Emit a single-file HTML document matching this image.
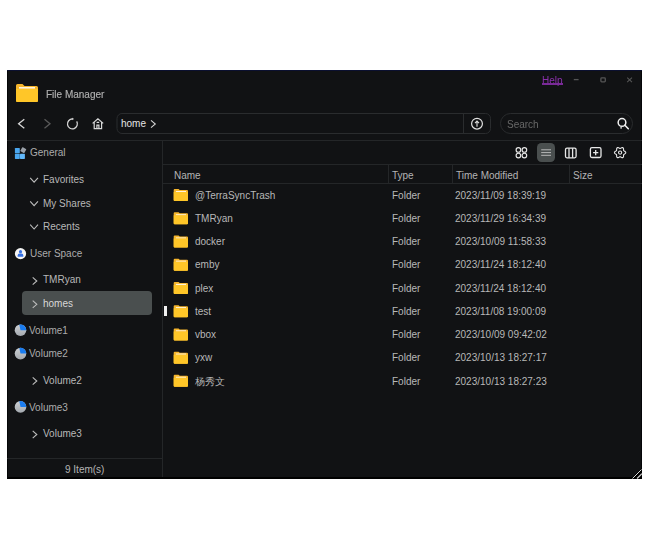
<!DOCTYPE html>
<html><head><meta charset="utf-8">
<style>
*{margin:0;padding:0;box-sizing:border-box}
html,body{width:648px;height:550px;background:#fff;overflow:hidden}
body{position:relative;font-family:"Liberation Sans",sans-serif;font-size:10px}
.t{position:absolute;white-space:pre;line-height:12px;color:#b8b8b8}
.r{position:absolute}
#ic{position:absolute;left:0;top:0}
</style></head><body>
<div class="r" style="left:7px;top:70px;width:635px;height:409px;background:#111214;"></div>
<div class="r" style="left:7px;top:70px;width:635px;height:1px;background:#0b1030;"></div>
<div class="r" style="left:7px;top:477px;width:635px;height:2px;background:#000;"></div>
<div class="r" style="left:7px;top:71px;width:1px;height:407px;background:#050608;"></div>
<div class="r" style="left:641px;top:71px;width:1px;height:407px;background:#050608;"></div>
<div class="t" style="left:46px;top:89px;color:#b0b0b0;will-change:transform;-webkit-text-stroke:0.15px #b0b0b0">File Manager</div>
<div class="t" style="left:542px;top:74.6px;color:#8a30ac;will-change:transform">Help</div>
<div class="r" style="left:542px;top:83.4px;width:21px;height:1.4px;background:#7a2a98;"></div>
<div class="t" style="left:121px;top:118px;color:#e4e4e4;">home</div>
<div class="t" style="left:507px;top:119px;color:#686868;">Search</div>
<div class="r" style="left:7px;top:140px;width:635px;height:1px;background:#242628;"></div>
<div class="r" style="left:162px;top:141px;width:1px;height:336px;background:#242628;"></div>
<div class="r" style="left:7px;top:458px;width:155px;height:1px;background:#242628;"></div>
<div class="t" style="left:65px;top:464px;color:#b4b4b4;">9 Item(s)</div>
<div class="t" style="left:30px;top:147px;color:#acacac;">General</div>
<div class="t" style="left:43px;top:174px;">Favorites</div>
<div class="t" style="left:43px;top:198px;">My Shares</div>
<div class="t" style="left:43px;top:221px;">Recents</div>
<div class="t" style="left:30px;top:248px;color:#acacac;">User Space</div>
<div class="t" style="left:43px;top:274px;">TMRyan</div>
<div class="r" style="left:22px;top:291px;width:130px;height:24px;background:#4a4f4f;border-radius:4px"></div>
<div class="t" style="left:43px;top:298px;color:#d8d8d8;">homes</div>
<div class="t" style="left:29px;top:325px;color:#acacac;">Volume1</div>
<div class="t" style="left:29px;top:348px;color:#acacac;">Volume2</div>
<div class="t" style="left:43px;top:375px;">Volume2</div>
<div class="t" style="left:29px;top:402px;color:#acacac;">Volume3</div>
<div class="t" style="left:43px;top:428px;">Volume3</div>
<div class="r" style="left:164px;top:306px;width:3px;height:10px;background:#f0f0f0;"></div>
<div class="r" style="left:536.8px;top:143.4px;width:18.5px;height:18.3px;background:#4a4f4f;border-radius:4.5px"></div>
<div class="r" style="left:163px;top:164px;width:479px;height:1px;background:#242628;"></div>
<div class="r" style="left:163px;top:183px;width:479px;height:1px;background:#242628;"></div>
<div class="r" style="left:388px;top:165px;width:1px;height:18px;background:#242628;"></div>
<div class="r" style="left:452px;top:165px;width:1px;height:18px;background:#242628;"></div>
<div class="r" style="left:569px;top:165px;width:1px;height:18px;background:#242628;"></div>
<div class="t" style="left:174px;top:170px;color:#b4b4b4;">Name</div>
<div class="t" style="left:392px;top:170px;color:#b4b4b4;">Type</div>
<div class="t" style="left:456px;top:170px;color:#b4b4b4;">Time Modified</div>
<div class="t" style="left:573px;top:170px;color:#b4b4b4;">Size</div>
<div class="t" style="left:195px;top:190px;">@TerraSyncTrash</div>
<div class="t" style="left:392px;top:190px;">Folder</div>
<div class="t" style="left:455px;top:190px;">2023/11/09 18:39:19</div>
<div class="t" style="left:195px;top:213px;">TMRyan</div>
<div class="t" style="left:392px;top:213px;">Folder</div>
<div class="t" style="left:455px;top:213px;">2023/11/29 16:34:39</div>
<div class="t" style="left:195px;top:236px;">docker</div>
<div class="t" style="left:392px;top:236px;">Folder</div>
<div class="t" style="left:455px;top:236px;">2023/10/09 11:58:33</div>
<div class="t" style="left:195px;top:259px;">emby</div>
<div class="t" style="left:392px;top:259px;">Folder</div>
<div class="t" style="left:455px;top:259px;">2023/11/24 18:12:40</div>
<div class="t" style="left:195px;top:283px;">plex</div>
<div class="t" style="left:392px;top:283px;">Folder</div>
<div class="t" style="left:455px;top:283px;">2023/11/24 18:12:40</div>
<div class="t" style="left:195px;top:306px;">test</div>
<div class="t" style="left:392px;top:306px;">Folder</div>
<div class="t" style="left:455px;top:306px;">2023/11/08 19:00:09</div>
<div class="t" style="left:195px;top:329px;">vbox</div>
<div class="t" style="left:392px;top:329px;">Folder</div>
<div class="t" style="left:455px;top:329px;">2023/10/09 09:42:02</div>
<div class="t" style="left:195px;top:352px;">yxw</div>
<div class="t" style="left:392px;top:352px;">Folder</div>
<div class="t" style="left:455px;top:352px;">2023/10/13 18:27:17</div>
<div class="t" style="left:195px;top:376px;">杨秀文</div>
<div class="t" style="left:392px;top:376px;">Folder</div>
<div class="t" style="left:455px;top:376px;">2023/10/13 18:27:23</div>
<svg id="ic" width="648" height="550" viewBox="0 0 648 550">
<defs><linearGradient id="pg" x1="0" y1="0" x2="0" y2="1"><stop offset="0" stop-color="#cdd0d4"/><stop offset="1" stop-color="#a4a9af"/></linearGradient></defs>
<path d="M17.5 84 H22.5 L24.5 86 H36.5 Q38 86 38 87.5 V100.5 Q38 102 36.5 102 H17.5 Q16 102 16 100.5 V85.5 Q16 84 17.5 84Z" fill="#f6b52c"/>
<rect x="19" y="87" width="16" height="1.6" fill="#fff4dc"/>
<path d="M16 89 H38 V100.5 Q38 102 36.5 102 H17.5 Q16 102 16 100.5Z" fill="#ffc628"/>
<path d="M573.8 79.6 H578.6" stroke="#555" stroke-width="1.3"/>
<rect x="600.9" y="77.9" width="4.4" height="3.9" rx="0.8" fill="none" stroke="#555" stroke-width="1.3"/>
<path d="M627.2 77.7 L632 82.2 M632 77.7 L627.2 82.2" stroke="#555" stroke-width="1.1"/>
<path d="M24.3 119.2 L18.6 123.7 L24.3 128.2" fill="none" stroke="#d8d8d8" stroke-width="1.3"/>
<path d="M44.5 119.2 L50 123.7 L44.5 128.2" fill="none" stroke="#5a5a5a" stroke-width="1.3"/>
<path d="M76.7 121.4 A4.95 4.95 0 1 1 72.4 118.95" fill="none" stroke="#d8d8d8" stroke-width="1.25"/>
<path d="M72.1 118.1 L73.6 118.95 L72.1 119.8Z" fill="#d8d8d8" stroke="#d8d8d8" stroke-width="0.5"/>
<path d="M92.6 123.4 L97.9 118.8 L103.2 123.4 M94.2 122.2 V128.7 H101.6 V122.2 M96.9 128.7 V125.2 H98.9 V128.7 M96.6 122.3 H99.2" fill="none" stroke="#d8d8d8" stroke-width="1.2"/>
<rect x="117" y="113.5" width="373.5" height="20" rx="5" fill="none" stroke="#2a2c2e" stroke-width="1"/>
<path d="M463.5 114 V133" stroke="#2a2c2e" stroke-width="1"/>
<path d="M151 120.3 L155.3 124 L151 127.7" fill="none" stroke="#d4d4d4" stroke-width="1.1"/>
<circle cx="477" cy="123.7" r="5.4" fill="none" stroke="#e2e2e2" stroke-width="1.2"/>
<path d="M477 126.8 V121.2 M475 123.2 L477 121 L479 123.2" fill="none" stroke="#e2e2e2" stroke-width="1.1"/>
<rect x="500.5" y="113.5" width="132" height="20" rx="10" fill="none" stroke="#2a2c2e" stroke-width="1"/>
<circle cx="622" cy="122.4" r="3.85" fill="none" stroke="#f0f0f0" stroke-width="1.5"/>
<path d="M624.9 125.3 L628.3 128.7" stroke="#f0f0f0" stroke-width="1.6" stroke-linecap="round"/><circle cx="621.1" cy="127.8" r="0.85" fill="#e8e8e8"/>
<rect x="14.9" y="148" width="4.9" height="5.3" rx="0.6" fill="#4aa6ee"/>
<rect x="14.9" y="153.8" width="4.9" height="5.1" rx="0.6" fill="#4aa6ee"/>
<rect x="20" y="153.8" width="4.9" height="5.1" rx="0.6" fill="#62b8fa"/>
<rect x="21" y="147.8" width="4.6" height="4.6" rx="0.6" fill="#9aa0a8" transform="rotate(30 23.3 150.1)"/>
<path d="M30.2 177.9 L34.1 182.2 L38 177.9" fill="none" stroke="#bdbdbd" stroke-width="1.1"/>
<path d="M30.2 201.3 L34.1 205.6 L38 201.3" fill="none" stroke="#bdbdbd" stroke-width="1.1"/>
<path d="M30.2 224.70000000000002 L34.1 229.0 L38 224.70000000000002" fill="none" stroke="#bdbdbd" stroke-width="1.1"/>
<circle cx="20.5" cy="253.6" r="5.6" fill="#f4f4f4"/>
<circle cx="20.5" cy="251.7" r="1.6" fill="#3570e4"/>
<path d="M17.7 256.8 V255.2 Q17.7 253.4 19.5 253.4 H21.5 Q23.3 253.4 23.3 255.2 V256.8Z" fill="#3570e4"/>
<path d="M32.7 277.4 L36.8 281 L32.7 284.6" fill="none" stroke="#bdbdbd" stroke-width="1.1"/>
<path d="M32.7 300.7 L36.8 304.3 L32.7 307.90000000000003" fill="none" stroke="#bdbdbd" stroke-width="1.1"/>
<circle cx="20.5" cy="330.2" r="5.8" fill="url(#pg)"/>
<path d="M20.5 330.2 L19.30 324.53 A5.8 5.8 0 0 1 26.3 330.2Z" fill="#1a7cf0"/>
<circle cx="20.5" cy="353.6" r="5.8" fill="url(#pg)"/>
<path d="M20.5 353.6 L19.30 347.93 A5.8 5.8 0 0 1 26.3 353.6Z" fill="#1a7cf0"/>
<path d="M32.7 377.4 L36.8 381 L32.7 384.6" fill="none" stroke="#bdbdbd" stroke-width="1.1"/>
<circle cx="20.5" cy="406.9" r="5.8" fill="url(#pg)"/>
<path d="M20.5 406.9 L19.30 401.23 A5.8 5.8 0 0 1 26.3 406.9Z" fill="#1a7cf0"/>
<path d="M32.7 430.9 L36.8 434.5 L32.7 438.1" fill="none" stroke="#bdbdbd" stroke-width="1.1"/>
<g fill="none" stroke="#e8e8e8" stroke-width="1.15"><circle cx="518.4" cy="149.9" r="2.3"/><circle cx="524.4" cy="149.9" r="2.3"/><circle cx="518.4" cy="155.5" r="2.3"/><circle cx="524.4" cy="155.5" r="2.3"/></g>
<path d="M541.2 149.8 H551 M541.2 152.6 H551 M541.2 155.3 H551" stroke="#c4c4c4" stroke-width="0.9"/>
<g fill="none" stroke="#e8e8e8" stroke-width="1.3"><rect x="565.5" y="148.2" width="10.6" height="9.6" rx="1.5"/><path d="M569 148.2 V157.8 M572.6 148.2 V157.8"/></g>
<g fill="none" stroke="#e8e8e8" stroke-width="1.3"><rect x="590.4" y="147.7" width="10.6" height="9.8" rx="1.5"/><path d="M595.7 150 V155.2 M593.1 152.6 H598.3"/></g>
<g fill="none" stroke="#e8e8e8" stroke-width="1.1"><path d="M625.75 152.60 L625.71 152.89 L625.58 153.18 L625.38 153.44 L625.12 153.67 L624.83 153.87 L624.54 154.04 L624.26 154.20 L624.02 154.35 L623.83 154.50 L623.69 154.67 L623.61 154.88 L623.57 155.12 L623.57 155.41 L623.57 155.72 L623.56 156.06 L623.53 156.41 L623.46 156.75 L623.34 157.06 L623.16 157.31 L622.93 157.49 L622.65 157.60 L622.34 157.63 L622.01 157.59 L621.69 157.48 L621.37 157.33 L621.07 157.17 L620.80 157.00 L620.55 156.87 L620.32 156.78 L620.10 156.75 L619.88 156.78 L619.65 156.87 L619.40 157.00 L619.13 157.17 L618.83 157.33 L618.51 157.48 L618.19 157.59 L617.86 157.63 L617.55 157.60 L617.27 157.49 L617.04 157.31 L616.86 157.06 L616.74 156.75 L616.67 156.41 L616.64 156.06 L616.63 155.72 L616.63 155.41 L616.63 155.12 L616.59 154.88 L616.51 154.67 L616.37 154.50 L616.18 154.35 L615.94 154.20 L615.66 154.04 L615.37 153.87 L615.08 153.67 L614.82 153.44 L614.62 153.18 L614.49 152.89 L614.45 152.60 L614.49 152.31 L614.62 152.02 L614.82 151.76 L615.08 151.53 L615.37 151.33 L615.66 151.16 L615.94 151.00 L616.18 150.85 L616.37 150.70 L616.51 150.53 L616.59 150.32 L616.63 150.08 L616.63 149.79 L616.63 149.48 L616.64 149.14 L616.67 148.79 L616.74 148.45 L616.86 148.14 L617.04 147.89 L617.27 147.71 L617.55 147.60 L617.86 147.57 L618.19 147.61 L618.51 147.72 L618.83 147.87 L619.13 148.03 L619.40 148.20 L619.65 148.33 L619.88 148.42 L620.10 148.45 L620.32 148.42 L620.55 148.33 L620.80 148.20 L621.07 148.03 L621.37 147.87 L621.69 147.72 L622.01 147.61 L622.34 147.57 L622.65 147.60 L622.93 147.71 L623.16 147.89 L623.34 148.14 L623.46 148.45 L623.53 148.79 L623.56 149.14 L623.57 149.48 L623.57 149.79 L623.57 150.08 L623.61 150.32 L623.69 150.53 L623.83 150.70 L624.02 150.85 L624.26 151.00 L624.54 151.16 L624.83 151.33 L625.12 151.53 L625.38 151.76 L625.58 152.02 L625.71 152.31 L625.75 152.60Z"/><circle cx="620.1" cy="152.6" r="1.6"/></g>
<path d="M174.7 189.10 H178.6 L179.7 190.10 H187.0 Q188.0 190.10 188.0 191.10 V200.10 Q188.0 201.10 187.0 201.10 H174.7 Q173.7 201.10 173.7 200.10 V190.10 Q173.7 189.10 174.7 189.10Z" fill="#f6b52c"/>
<rect x="175.89999999999998" y="191.00" width="10.1" height="1.1" fill="#fff4dc"/>
<path d="M173.7 192.10 H188.0 V200.10 Q188.0 201.10 187.0 201.10 H174.7 Q173.7 201.10 173.7 200.10Z" fill="#ffc628"/>
<path d="M174.7 212.32 H178.6 L179.7 213.32 H187.0 Q188.0 213.32 188.0 214.32 V223.32 Q188.0 224.32 187.0 224.32 H174.7 Q173.7 224.32 173.7 223.32 V213.32 Q173.7 212.32 174.7 212.32Z" fill="#f6b52c"/>
<rect x="175.89999999999998" y="214.22" width="10.1" height="1.1" fill="#fff4dc"/>
<path d="M173.7 215.32 H188.0 V223.32 Q188.0 224.32 187.0 224.32 H174.7 Q173.7 224.32 173.7 223.32Z" fill="#ffc628"/>
<path d="M174.7 235.54 H178.6 L179.7 236.54 H187.0 Q188.0 236.54 188.0 237.54 V246.54 Q188.0 247.54 187.0 247.54 H174.7 Q173.7 247.54 173.7 246.54 V236.54 Q173.7 235.54 174.7 235.54Z" fill="#f6b52c"/>
<rect x="175.89999999999998" y="237.44" width="10.1" height="1.1" fill="#fff4dc"/>
<path d="M173.7 238.54 H188.0 V246.54 Q188.0 247.54 187.0 247.54 H174.7 Q173.7 247.54 173.7 246.54Z" fill="#ffc628"/>
<path d="M174.7 258.76 H178.6 L179.7 259.76 H187.0 Q188.0 259.76 188.0 260.76 V269.76 Q188.0 270.76 187.0 270.76 H174.7 Q173.7 270.76 173.7 269.76 V259.76 Q173.7 258.76 174.7 258.76Z" fill="#f6b52c"/>
<rect x="175.89999999999998" y="260.66" width="10.1" height="1.1" fill="#fff4dc"/>
<path d="M173.7 261.76 H188.0 V269.76 Q188.0 270.76 187.0 270.76 H174.7 Q173.7 270.76 173.7 269.76Z" fill="#ffc628"/>
<path d="M174.7 281.98 H178.6 L179.7 282.98 H187.0 Q188.0 282.98 188.0 283.98 V292.98 Q188.0 293.98 187.0 293.98 H174.7 Q173.7 293.98 173.7 292.98 V282.98 Q173.7 281.98 174.7 281.98Z" fill="#f6b52c"/>
<rect x="175.89999999999998" y="283.88" width="10.1" height="1.1" fill="#fff4dc"/>
<path d="M173.7 284.98 H188.0 V292.98 Q188.0 293.98 187.0 293.98 H174.7 Q173.7 293.98 173.7 292.98Z" fill="#ffc628"/>
<path d="M174.7 305.20 H178.6 L179.7 306.20 H187.0 Q188.0 306.20 188.0 307.20 V316.20 Q188.0 317.20 187.0 317.20 H174.7 Q173.7 317.20 173.7 316.20 V306.20 Q173.7 305.20 174.7 305.20Z" fill="#f6b52c"/>
<rect x="175.89999999999998" y="307.10" width="10.1" height="1.1" fill="#fff4dc"/>
<path d="M173.7 308.20 H188.0 V316.20 Q188.0 317.20 187.0 317.20 H174.7 Q173.7 317.20 173.7 316.20Z" fill="#ffc628"/>
<path d="M174.7 328.42 H178.6 L179.7 329.42 H187.0 Q188.0 329.42 188.0 330.42 V339.42 Q188.0 340.42 187.0 340.42 H174.7 Q173.7 340.42 173.7 339.42 V329.42 Q173.7 328.42 174.7 328.42Z" fill="#f6b52c"/>
<rect x="175.89999999999998" y="330.32" width="10.1" height="1.1" fill="#fff4dc"/>
<path d="M173.7 331.42 H188.0 V339.42 Q188.0 340.42 187.0 340.42 H174.7 Q173.7 340.42 173.7 339.42Z" fill="#ffc628"/>
<path d="M174.7 351.64 H178.6 L179.7 352.64 H187.0 Q188.0 352.64 188.0 353.64 V362.64 Q188.0 363.64 187.0 363.64 H174.7 Q173.7 363.64 173.7 362.64 V352.64 Q173.7 351.64 174.7 351.64Z" fill="#f6b52c"/>
<rect x="175.89999999999998" y="353.54" width="10.1" height="1.1" fill="#fff4dc"/>
<path d="M173.7 354.64 H188.0 V362.64 Q188.0 363.64 187.0 363.64 H174.7 Q173.7 363.64 173.7 362.64Z" fill="#ffc628"/>
<path d="M174.7 374.86 H178.6 L179.7 375.86 H187.0 Q188.0 375.86 188.0 376.86 V385.86 Q188.0 386.86 187.0 386.86 H174.7 Q173.7 386.86 173.7 385.86 V375.86 Q173.7 374.86 174.7 374.86Z" fill="#f6b52c"/>
<rect x="175.89999999999998" y="376.76" width="10.1" height="1.1" fill="#fff4dc"/>
<path d="M173.7 377.86 H188.0 V385.86 Q188.0 386.86 187.0 386.86 H174.7 Q173.7 386.86 173.7 385.86Z" fill="#ffc628"/>
<path d="M642 468 V479 H631Z" fill="#000"/>
<path d="M641.5 469.5 L632.5 478.5" stroke="#d8d8d8" stroke-width="1"/><path d="M642 473.6 L637.1 478.5" stroke="#d0d0d0" stroke-width="1.25"/>
</svg>
</body></html>
